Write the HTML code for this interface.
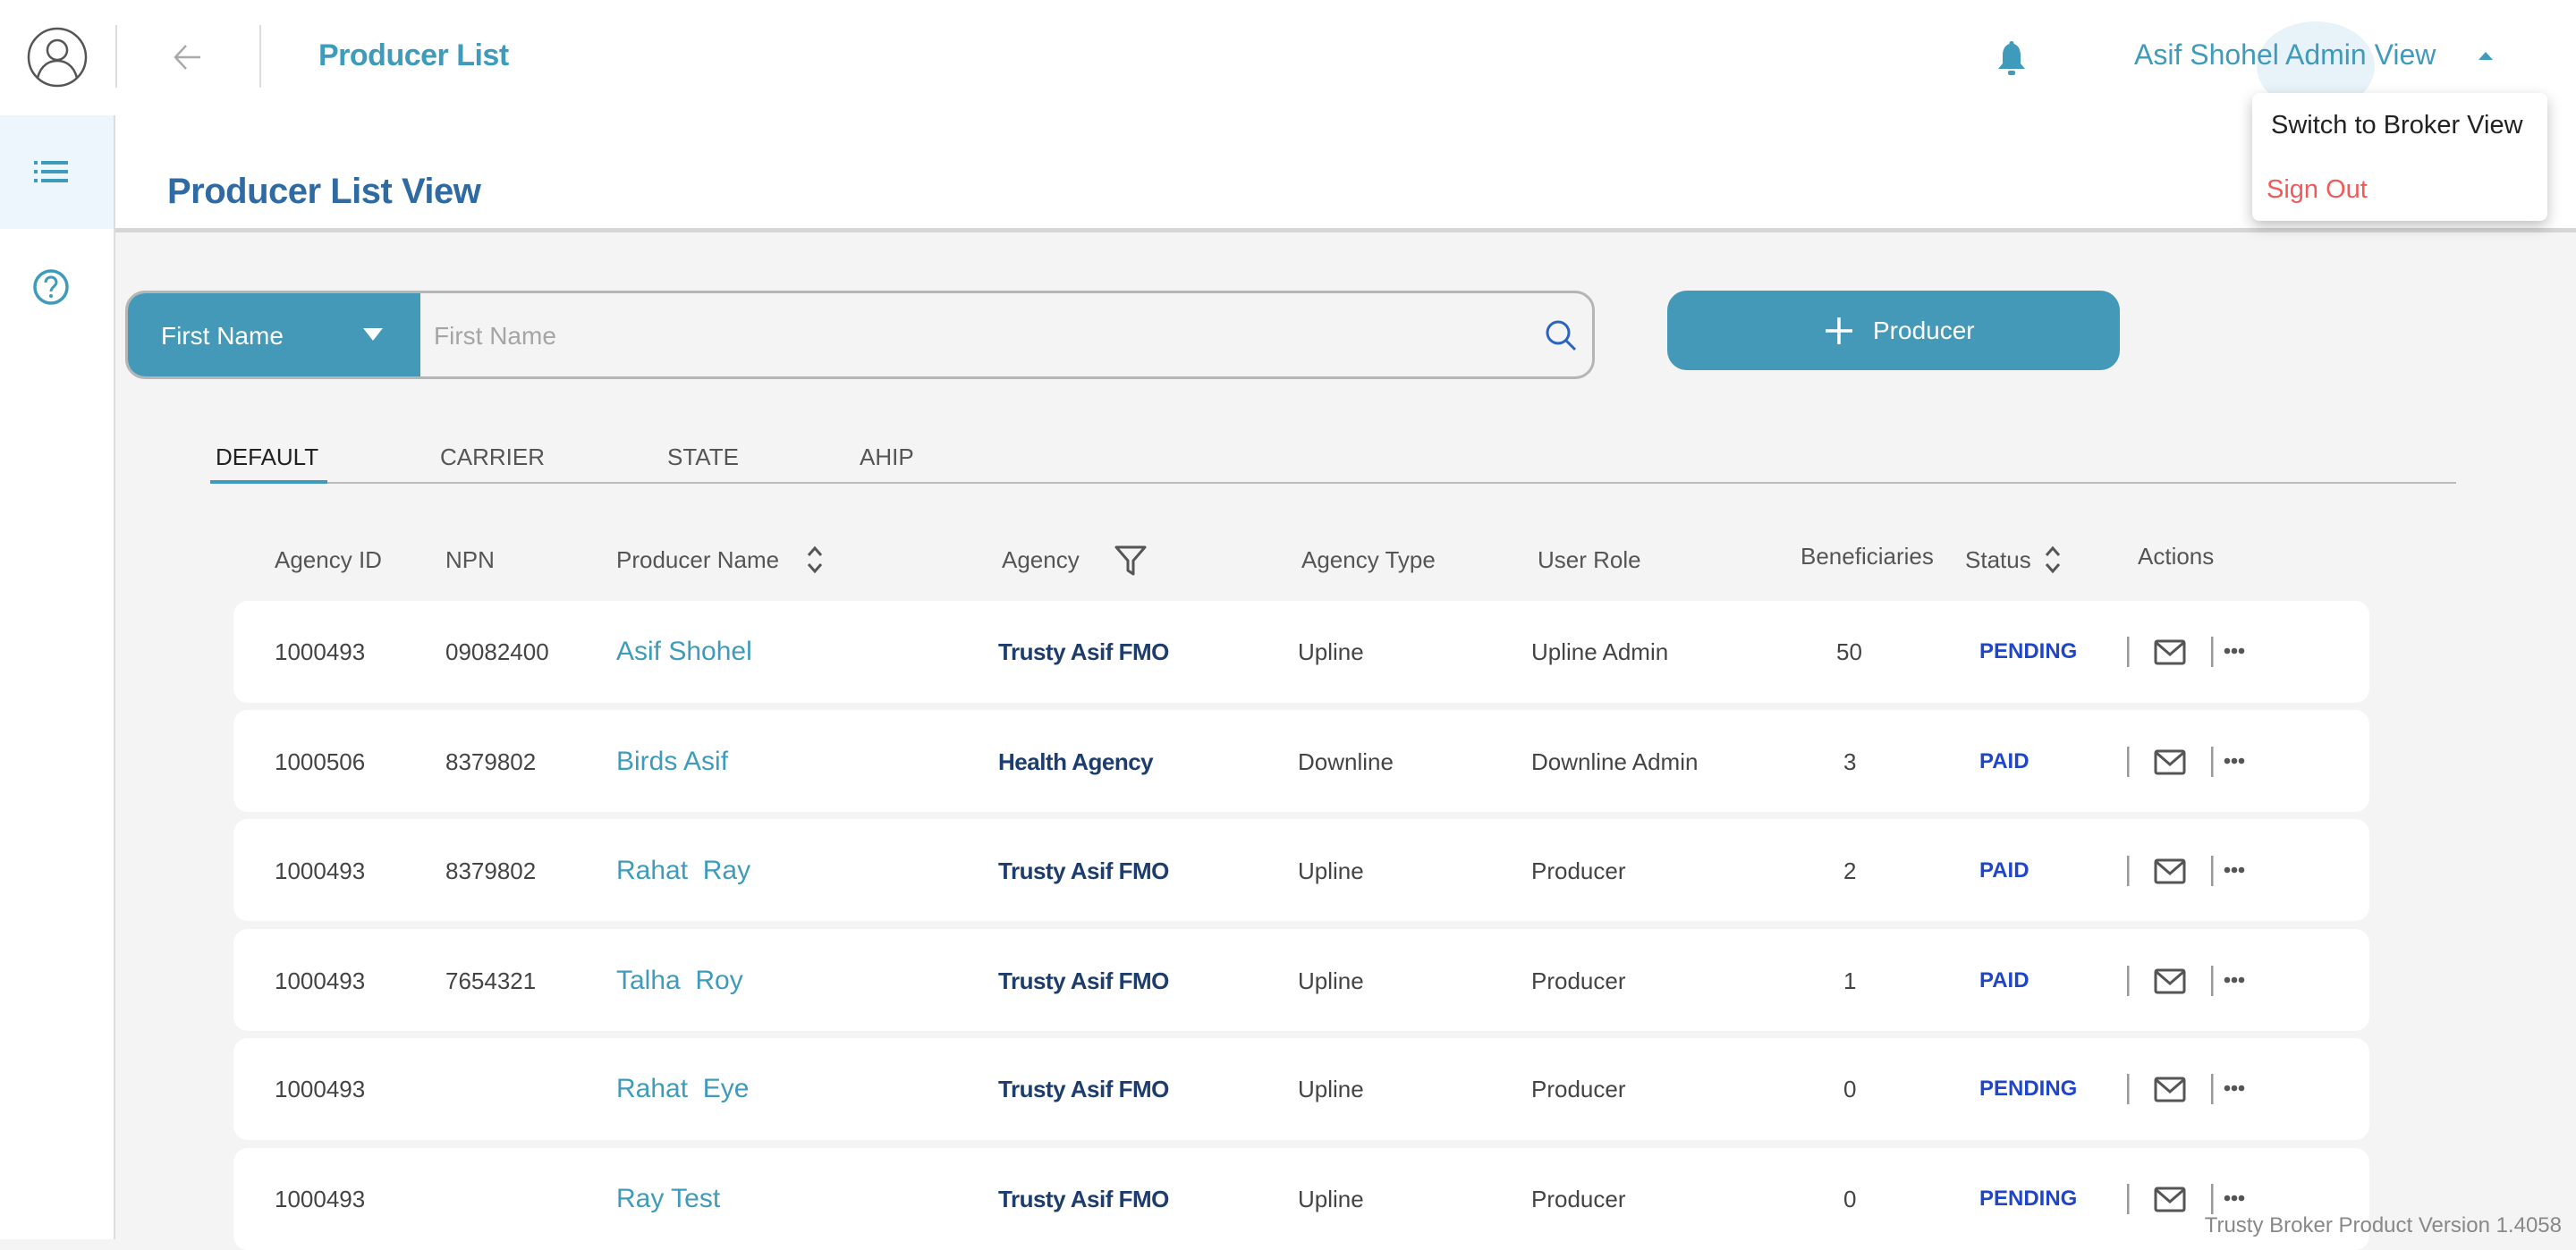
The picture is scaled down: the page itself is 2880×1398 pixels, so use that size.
<!DOCTYPE html>
<html><head><meta charset="utf-8"><style>
*{margin:0;padding:0;box-sizing:border-box}
body{width:2880px;height:1386px;overflow:hidden;background:#f4f4f4;font-family:"Liberation Sans",sans-serif;position:relative;color:#444}
.a{position:absolute;white-space:nowrap}
.hdr{left:0;top:0;width:2880px;height:129px;background:#fff}
.top{left:129px;top:129px;width:2751px;height:131px;background:#fff;border-bottom:5px solid #d6d6d6}
.side{left:0;top:129px;width:129px;height:1257px;background:#fff;border-right:2px solid #ddd}
.th{top:610px;font-size:26px;color:#555;line-height:32px}
.card{left:261px;width:2388px;height:114px;background:#fff;border-radius:16px}
.c{font-size:26px;color:#444;line-height:32px}
.nm{font-size:30px;color:#3f9bbb}
.ag{font-size:26px;font-weight:bold;color:#1c3d6e;letter-spacing:-0.5px}
.st{font-size:24px;font-weight:bold;color:#1f45c8}
</style></head><body>
<div class="a hdr"></div>
<div class="a top"></div>
<div class="a side"></div>
<div class="a" style="left:0;top:129px;width:127px;height:127px;background:#eef6fd"></div>
<div class="a" style="left:129px;top:28px;width:2px;height:70px;background:#ddd"></div>
<div class="a" style="left:290px;top:28px;width:2px;height:70px;background:#ddd"></div>
<svg class="a" style="left:30px;top:30px" width="68" height="68" viewBox="0 0 68 68"><circle cx="34" cy="34" r="32" fill="none" stroke="#555" stroke-width="2.5"/><circle cx="34" cy="26" r="11" fill="none" stroke="#555" stroke-width="2.5"/><path d="M12 57 C16 42 26 38 34 38 C42 38 52 42 56 57" fill="none" stroke="#555" stroke-width="2.5"/></svg>
<svg class="a" style="left:192px;top:46px" width="36" height="36" viewBox="0 0 36 36"><path d="M32 18H4M16 5L4 18l12 13" fill="none" stroke="#aaa" stroke-width="2.5"/></svg>
<div class="a" style="left:356px;top:43px;font-size:34px;font-weight:bold;color:#3f9bbb;letter-spacing:-0.5px">Producer List</div>
<svg class="a" style="left:38px;top:180px" width="38" height="24" viewBox="0 0 38 24"><g fill="#3f9bbb"><rect x="0" y="0" width="4" height="4"/><rect x="0" y="10" width="4" height="4"/><rect x="0" y="20" width="4" height="4"/><rect x="8" y="0" width="30" height="4"/><rect x="8" y="10" width="30" height="4"/><rect x="8" y="20" width="30" height="4"/></g></svg>
<svg class="a" style="left:36px;top:300px" width="42" height="42" viewBox="0 0 42 42"><circle cx="21" cy="21" r="18" fill="none" stroke="#3f9bbb" stroke-width="3.5"/><path d="M15 16c0-4 3-6 6-6s6 2 6 6c0 4-6 5-6 10" fill="none" stroke="#3f9bbb" stroke-width="3"/><circle cx="21" cy="31" r="2" fill="#3f9bbb"/></svg>
<div class="a" style="left:187px;top:192px;font-size:40px;font-weight:bold;color:#2f6aa3;letter-spacing:-0.5px">Producer List View</div>
<svg class="a" style="left:2232px;top:44px" width="34" height="42" viewBox="0 0 34 42"><path d="M17 2c2 0 2.5 1.5 2.5 3C25 7 27 12 27 18v9l5 6H2l5-6v-9C7 12 9 7 14.5 5 14.5 3.5 15 2 17 2z" fill="#3f9bbb"/><rect x="13" y="35" width="8" height="5" rx="2" fill="#3f9bbb"/></svg>
<div class="a" style="left:2523px;top:24px;width:132px;height:100px;border-radius:50%;background:#e8f2f9"></div>
<div class="a" style="left:2386px;top:43px;font-size:32px;color:#3f9bbb">Asif Shohel Admin View</div>
<svg class="a" style="left:2770px;top:56px" width="18" height="12" viewBox="0 0 18 12"><path d="M1 11L9 2l8 9z" fill="#3f9bbb"/></svg>
<div class="a" style="left:2518px;top:104px;width:330px;height:143px;background:#fff;border-radius:8px;box-shadow:0 6px 16px rgba(0,0,0,.25)"></div>
<div class="a" style="left:2539px;top:124px;font-size:29px;color:#222">Switch to Broker View</div>
<div class="a" style="left:2534px;top:196px;font-size:29px;color:#ef5a5a">Sign Out</div>
<div class="a" style="left:140px;top:325px;width:1643px;height:99px;border:3px solid #b5b5b5;border-radius:22px;background:#f4f4f4;overflow:hidden">
 <div class="a" style="left:0;top:0;width:327px;height:99px;background:#4499b9"></div>
</div>
<div class="a" style="left:180px;top:360px;font-size:28px;color:#fff">First Name</div>
<svg class="a" style="left:405px;top:366px" width="24" height="16" viewBox="0 0 24 16"><path d="M1 1h22L12 15z" fill="#fff"/></svg>
<div class="a" style="left:485px;top:360px;font-size:28px;color:#a5a5a5">First Name</div>
<svg class="a" style="left:1726px;top:356px" width="38" height="38" viewBox="0 0 38 38"><circle cx="16" cy="16" r="12" fill="none" stroke="#2b63c4" stroke-width="3"/><path d="M25 25l10 10" stroke="#2b63c4" stroke-width="3"/></svg>
<div class="a" style="left:1864px;top:325px;width:506px;height:89px;border-radius:22px;background:#4499b9"></div>
<svg class="a" style="left:2040px;top:354px" width="32" height="32" viewBox="0 0 32 32"><path d="M16 1v30M1 16h30" stroke="#fff" stroke-width="3.5"/></svg>
<div class="a" style="left:2094px;top:354px;font-size:28px;color:#fff">Producer</div>
<div class="a" style="left:235px;top:539px;width:2511px;height:2px;background:#bbb"></div>
<div class="a" style="left:235px;top:537px;width:131px;height:4px;background:#3f9bbb"></div>
<div class="a" style="left:241px;top:496px;font-size:26px;color:#222">DEFAULT</div>
<div class="a" style="left:492px;top:496px;font-size:26px;color:#555">CARRIER</div>
<div class="a" style="left:746px;top:496px;font-size:26px;color:#555">STATE</div>
<div class="a" style="left:961px;top:496px;font-size:26px;color:#555">AHIP</div>
<div class="a th" style="left:307px">Agency ID</div>
<div class="a th" style="left:498px">NPN</div>
<div class="a th" style="left:689px">Producer Name</div>
<svg class="a" style="left:900px;top:609px" width="22" height="34" viewBox="0 0 22 34"><path d="M4 12l7-8 7 8M4 22l7 8 7-8" fill="none" stroke="#555" stroke-width="3"/></svg>
<div class="a th" style="left:1120px">Agency</div>
<svg class="a" style="left:1246px;top:610px" width="36" height="34" viewBox="0 0 36 34"><path d="M2 2h32L21 17v15l-6-4V17z" fill="none" stroke="#555" stroke-width="3" stroke-linejoin="round"/></svg>
<div class="a th" style="left:1455px">Agency Type</div>
<div class="a th" style="left:1719px">User Role</div>
<div class="a th" style="left:2013px;top:606px">Beneficiaries</div>
<div class="a th" style="left:2197px">Status</div>
<svg class="a" style="left:2284px;top:609px" width="22" height="34" viewBox="0 0 22 34"><path d="M4 12l7-8 7 8M4 22l7 8 7-8" fill="none" stroke="#555" stroke-width="3"/></svg>
<div class="a th" style="left:2390px;top:606px">Actions</div>
<div class="a card" style="top:672px"></div>
<div class="a card" style="top:794px"></div>
<div class="a card" style="top:916px"></div>
<div class="a card" style="top:1039px"></div>
<div class="a card" style="top:1161px"></div>
<div class="a card" style="top:1284px"></div>
<div class="a c" style="left:307px;top:713px">1000493</div><div class="a c" style="left:498px;top:713px">09082400</div><div class="a nm" style="left:689px;top:712px">Asif Shohel</div><div class="a ag" style="left:1116px;top:714px">Trusty Asif FMO</div><div class="a c" style="left:1451px;top:713px">Upline</div><div class="a c" style="left:1712px;top:713px">Upline Admin</div><div class="a c" style="left:2053px;top:713px">50</div><div class="a st" style="left:2213px;top:715px">PENDING</div>
<div class="a c" style="left:307px;top:836px">1000506</div><div class="a c" style="left:498px;top:836px">8379802</div><div class="a nm" style="left:689px;top:835px">Birds Asif</div><div class="a ag" style="left:1116px;top:837px">Health Agency</div><div class="a c" style="left:1451px;top:836px">Downline</div><div class="a c" style="left:1712px;top:836px">Downline Admin</div><div class="a c" style="left:2061px;top:836px">3</div><div class="a st" style="left:2213px;top:838px">PAID</div>
<div class="a c" style="left:307px;top:958px">1000493</div><div class="a c" style="left:498px;top:958px">8379802</div><div class="a nm" style="left:689px;top:957px">Rahat&nbsp; Ray</div><div class="a ag" style="left:1116px;top:959px">Trusty Asif FMO</div><div class="a c" style="left:1451px;top:958px">Upline</div><div class="a c" style="left:1712px;top:958px">Producer</div><div class="a c" style="left:2061px;top:958px">2</div><div class="a st" style="left:2213px;top:960px">PAID</div>
<div class="a c" style="left:307px;top:1081px">1000493</div><div class="a c" style="left:498px;top:1081px">7654321</div><div class="a nm" style="left:689px;top:1080px">Talha&nbsp; Roy</div><div class="a ag" style="left:1116px;top:1082px">Trusty Asif FMO</div><div class="a c" style="left:1451px;top:1081px">Upline</div><div class="a c" style="left:1712px;top:1081px">Producer</div><div class="a c" style="left:2061px;top:1081px">1</div><div class="a st" style="left:2213px;top:1083px">PAID</div>
<div class="a c" style="left:307px;top:1202px">1000493</div><div class="a nm" style="left:689px;top:1201px">Rahat&nbsp; Eye</div><div class="a ag" style="left:1116px;top:1203px">Trusty Asif FMO</div><div class="a c" style="left:1451px;top:1202px">Upline</div><div class="a c" style="left:1712px;top:1202px">Producer</div><div class="a c" style="left:2061px;top:1202px">0</div><div class="a st" style="left:2213px;top:1204px">PENDING</div>
<div class="a c" style="left:307px;top:1325px">1000493</div><div class="a nm" style="left:689px;top:1324px">Ray Test</div><div class="a ag" style="left:1116px;top:1326px">Trusty Asif FMO</div><div class="a c" style="left:1451px;top:1325px">Upline</div><div class="a c" style="left:1712px;top:1325px">Producer</div><div class="a c" style="left:2061px;top:1325px">0</div><div class="a st" style="left:2213px;top:1327px">PENDING</div>
<svg class="a" style="left:2370px;top:0" width="150" height="1386" viewBox="0 0 150 1386">
<defs><g id="act"><rect x="8" y="-17" width="2.5" height="34" fill="#999"/><rect x="40" y="-12" width="32" height="25" rx="2" fill="none" stroke="#555" stroke-width="3"/><path d="M41 -10l15 13 15-13" fill="none" stroke="#555" stroke-width="3"/><rect x="102" y="-17" width="2.5" height="34" fill="#999"/><circle cx="120" cy="-1" r="3.3" fill="#555"/><circle cx="128" cy="-1" r="3.3" fill="#555"/><circle cx="136" cy="-1" r="3.3" fill="#555"/></g></defs>
<use href="#act" y="729"/><use href="#act" y="852"/><use href="#act" y="974"/><use href="#act" y="1097"/><use href="#act" y="1218"/><use href="#act" y="1341"/>
</svg>
<div class="a" style="right:16px;top:1357px;font-size:24px;color:#888">Trusty Broker Product Version 1.4058</div>
</body></html>
